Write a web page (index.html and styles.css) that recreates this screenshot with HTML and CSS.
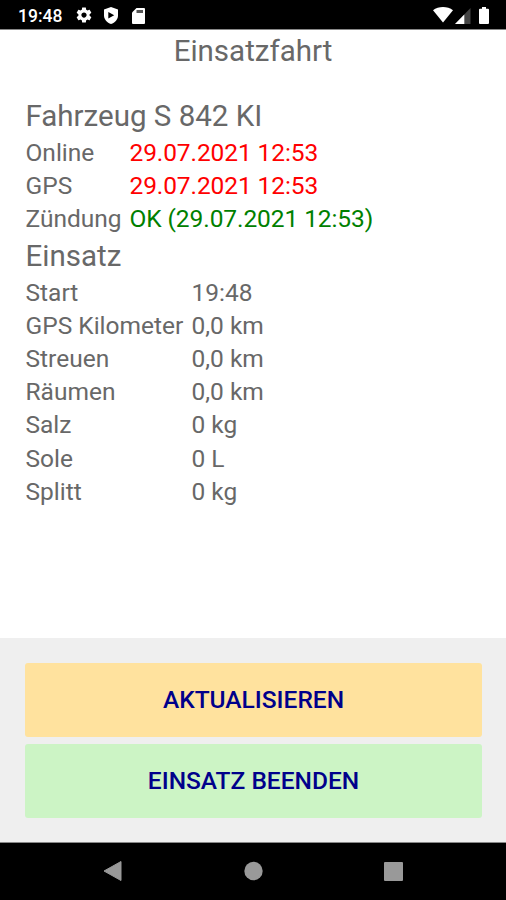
FILE: index.html
```html
<!DOCTYPE html>
<html lang="de">
<head>
    <meta charset="UTF-8">
    <meta name="viewport" content="width=device-width, initial-scale=1.0">
    <title>Einsatzfahrt</title>
    <link rel="stylesheet" href="styles.css">
</head>
<body>
    <div class="status-bar">
        <span class="clock">19:48</span>
        <svg class="icon-gear" width="18" height="18" viewBox="0 0 24 24"><path fill="#fff" d="M19.43 12.98c.04-.32.07-.64.07-.98s-.03-.66-.07-.98l2.11-1.65c.19-.15.24-.42.12-.64l-2-3.46c-.12-.22-.39-.3-.61-.22l-2.49 1c-.52-.4-1.08-.73-1.69-.98l-.38-2.65C14.46 2.18 14.25 2 14 2h-4c-.25 0-.46.18-.49.42l-.38 2.65c-.61.25-1.17.59-1.69.98l-2.49-1c-.23-.09-.49 0-.61.22l-2 3.46c-.13.22-.07.49.12.64l2.11 1.65c-.04.32-.07.65-.07.98s.03.66.07.98l-2.11 1.65c-.19.15-.24.42-.12.64l2 3.46c.12.22.39.3.61.22l2.49-1c.52.4 1.08.73 1.69.98l.38 2.65c.03.24.24.42.49.42h4c.25 0 .46-.18.49-.42l.38-2.65c.61-.25 1.17-.59 1.69-.98l2.49 1c.23.09.49 0 .61-.22l2-3.46c.12-.22.07-.49-.12-.64l-2.11-1.65zM12 15.5c-1.93 0-3.5-1.57-3.5-3.5s1.57-3.5 3.5-3.5 3.5 1.57 3.5 3.5-1.57 3.5-3.5 3.5z"/></svg>
        <svg class="icon-shield" width="14" height="17" viewBox="0 0 14 17"><path fill="#fff" d="M7 0L0 2.6V8.500C0 12.300 3 15.700 7 17c4-1.300 7-4.700 7-8.500V2.600z"/><path fill="#000" d="M4.300 5.100v6.400L10.200 8.300z"/></svg>
        <svg class="icon-card" width="13" height="16" viewBox="0 0 13 16"><path fill="#fff" d="M4.500 0H12a1 1 0 0 1 1 1v14a1 1 0 0 1-1 1H1a1 1 0 0 1-1-1V4.500z"/><path fill="#555" d="M4.500 2h6.500v3H4.500z"/></svg>
        <span class="spacer"></span>
        <svg class="icon-wifi" width="20" height="16" viewBox="0 0 20 16"><path fill="#fff" d="M0 3.200C5.500-1 14.500-1 20 3.200L10 15.500z"/></svg>
        <svg class="icon-signal" width="16" height="16" viewBox="0 0 16 16"><path fill="#444" d="M15.500 0v16H0z"/><path fill="#fff" d="M9.300 6.400V16H0z"/></svg>
        <svg class="icon-battery" width="10" height="17" viewBox="0 0 10 17"><path fill="#fff" d="M3 0h4v1.700h2a1 1 0 0 1 1 1V16a1 1 0 0 1-1 1H1a1 1 0 0 1-1-1V2.700a1 1 0 0 1 1-1h2z"/></svg>
    </div>

    <div class="content">
        <h1>Einsatzfahrt</h1>

        <h2 class="vehicle">Fahrzeug S 842 KI</h2>
        <div class="table vehicle-table">
            <span>Online</span><span class="red">29.07.2021 12:53</span>
            <span>GPS</span><span class="red">29.07.2021 12:53</span>
            <span>Zündung</span><span class="green">OK (29.07.2021 12:53)</span>
        </div>

        <h2>Einsatz</h2>
        <div class="table">
            <span>Start</span><span>19:48</span>
            <span>GPS Kilometer</span><span>0,0 km</span>
            <span>Streuen</span><span>0,0 km</span>
            <span>Räumen</span><span>0,0 km</span>
            <span>Salz</span><span>0 kg</span>
            <span>Sole</span><span>0 L</span>
            <span>Splitt</span><span>0 kg</span>
        </div>
    </div>

    <div class="buttons">
        <button class="refresh">AKTUALISIEREN</button>
        <button class="finish">EINSATZ BEENDEN</button>
    </div>

    <div class="nav-bar">
        <svg width="506" height="57" viewBox="0 0 506 57">
            <path fill="#999" stroke="#999" stroke-linejoin="round" d="M104 28L121 18.500V37.500z"/>
            <circle fill="#999" cx="253.500" cy="28" r="9.200"/>
            <rect fill="#999" x="384" y="19" width="19" height="19" rx="1"/>
        </svg>
    </div>
</body>
</html>
```
FILE: styles.css
```css
body {
    font-family: Roboto, sans-serif;
    margin: 0;
    height: 900px;
    display: flex;
    flex-direction: column;
    background-color: white;
    color: #686868;
    overflow: hidden;
}
.status-bar {
    display: flex;
    box-sizing: border-box;
    height: 30px;
    padding: 0 17px 0 18px;
    background-color: black;
    border-bottom: 1px solid #888;
    align-items: center;
}
.clock {
    width: 57px;
    color: white;
    font-size: 17.500px;
    font-weight: 500;
    line-height: 20px;
    padding-top: 2px;
}
.icon-gear {
    margin-top: 1px;
    margin-right: 11px;
}
.icon-shield {
    margin-top: 1px;
    margin-right: 14px;
}
.icon-card {
    margin-top: 2px;
}
.spacer {
    flex: 1;
}
.icon-wifi {
    margin-top: 1px;
    margin-right: 2px;
}
.icon-signal {
    margin-top: 2px;
    margin-right: 8px;
}
.icon-battery {
    margin-top: 1px;
}
.content {
    flex: 1;
    padding: 0 25px;
}
h1, h2 {
    margin: 0;
    font-size: 29.500px;
    font-weight: 400;
    line-height: 40px;
}
h1 {
    text-align: center;
    line-height: 43px;
}
.vehicle {
    margin-top: 23px;
}
h2, .table {
    padding-left: 0.5px;
}
.table {
    display: grid;
    grid-template-columns: 166px 1fr;
    font-size: 24.500px;
    line-height: 33.200px;
    white-space: nowrap;
}
.vehicle-table {
    grid-template-columns: 104px 1fr;
}
.red {
    color: #f00;
    letter-spacing: -0.1px;
}
.green {
    color: #008000;
    letter-spacing: -0.08px;
}
.buttons {
    display: flex;
    flex-direction: column;
    gap: 7px;
    box-sizing: border-box;
    height: 204px;
    padding: 24.500px 24px 0 25px;
    background-color: #efefef;
}
button {
    height: 74px;
    padding: 0;
    border: none;
    border-radius: 3px;
    color: #00008b;
    font-family: Roboto, sans-serif;
    font-size: 24.500px;
    font-weight: 500;
}
.refresh {
    background-color: #ffe29e;
}
.finish {
    background-color: #ccf4c5;
}
.nav-bar {
    height: 57px;
    background-color: black;
    border-top: 1px solid #888;
}
```
